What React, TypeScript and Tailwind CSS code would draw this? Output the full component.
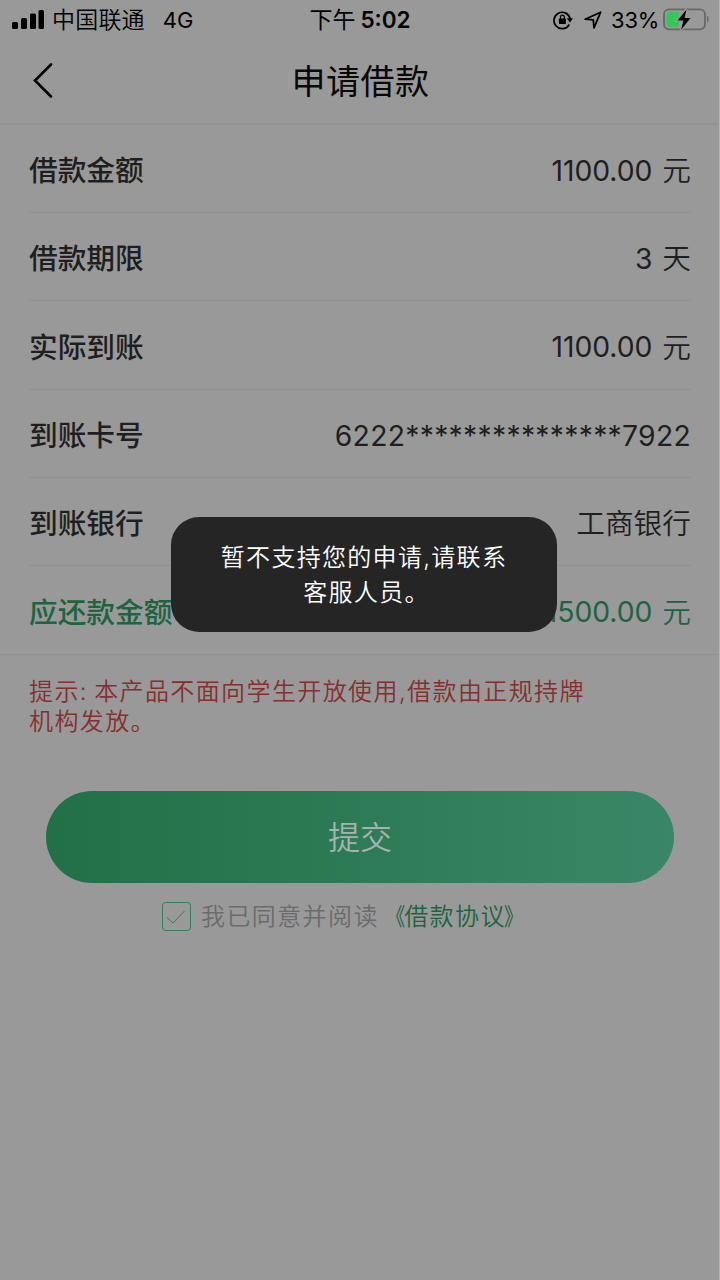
import React from "react";

type LoanRow = {
  label: string;
  value?: string;
  unit?: string;
  wide?: boolean;
  highlight?: boolean;
};

const rows: LoanRow[] = [
  { label: "借款金额", value: "1100.00", unit: "元" },
  { label: "借款期限", value: "3", unit: "天" },
  { label: "实际到账", value: "1100.00", unit: "元" },
  { label: "到账卡号", value: "6222***************7922", wide: true },
  { label: "到账银行", unit: "工商银行" },
  { label: "应还款金额", value: "1500.00", unit: "元", highlight: true },
];

const StatusBar: React.FC = () => {
  return (
    <div className="grid h-10 grid-cols-[1fr_auto_1fr] items-center pl-3 pr-[9px] text-[23px] leading-none text-black">
      <div className="flex items-center">
        <svg width="33" height="20" viewBox="0 0 33 20" fill="#000">
          <rect x="0" y="12" width="6" height="7" rx="1.6" />
          <rect x="9" y="8" width="6" height="11" rx="1.6" />
          <rect x="18" y="3.5" width="6" height="15.5" rx="1.6" />
          <rect x="26.5" y="0" width="5.5" height="19" rx="1.6" />
        </svg>
        <span className="ml-[7px] font-[350] tracking-[0.2px]">中国联通</span>
        <span className="ml-[18px] text-[22px]">4G</span>
      </div>
      <div className="flex items-center gap-[5px] pr-[2px]">
        <span>下午</span>
        <span className="text-[22.5px] font-semibold">5:02</span>
      </div>
      <div className="flex items-center justify-end">
        {/* rotation lock */}
        <svg width="20" height="20" viewBox="0 0 20 20" fill="none">
          <path d="M16.3 14.5A8.2 8.2 0 1 1 17.2 9" stroke="#000" strokeWidth="1.7" />
          <path d="M13.8 8.3h6.2l-3.1 4.2z" fill="#000" />
          <rect x="5.9" y="8.5" width="7" height="5.6" rx="0.8" fill="#000" />
          <path d="M7.5 9V7a1.9 1.9 0 0 1 3.8 0v2" stroke="#000" strokeWidth="1.3" />
        </svg>
        <svg className="ml-[11px]" width="18" height="18" viewBox="0 0 18 18" fill="none">
          <path d="M1.2 8.2 16.6 1.2 10 16.8 9.3 8.8z" stroke="#000" strokeWidth="1.8" strokeLinejoin="round" />
        </svg>
        <span className="ml-[9px] text-[22px] tracking-[-0.3px]">33%</span>
        <svg className="ml-1" width="47" height="24" viewBox="0 0 47 24" fill="none">
          <rect x="1" y="1.3" width="41" height="20" rx="5" stroke="#686868" strokeWidth="1.8" />
          <path d="M44 8c2.2.8 2.2 5.8 0 6.6z" fill="#686868" />
          <rect x="3.5" y="3.8" width="12.5" height="15" rx="2.5" fill="#34c759" />
          <path
            d="M23.5 1.5 14.5 12.5h6l-2.5 9.5L27.5 10h-6z"
            fill="#000"
            stroke="#999"
            strokeWidth="3"
            paintOrder="stroke"
          />
        </svg>
      </div>
    </div>
  );
};

const App: React.FC = () => {
  return (
    <div className="relative h-[1280px] w-[720px] overflow-hidden border-r border-[#b5b5b5] bg-[#999999] font-['Inter','Noto_Sans_CJK_SC',sans-serif]">
      <StatusBar />
      <header className="grid h-[85px] grid-cols-[1fr_auto_1fr] items-center border-b-2 border-[#929292] px-[30px] pb-[3px]">
        <svg width="26" height="38" viewBox="0 0 26 38" fill="none">
          <path d="M21 3.5 5 19.5 21 35.5" stroke="#000" strokeWidth="2.6" strokeLinecap="round" />
        </svg>
        <h1 className="pl-[2px] pt-[3px] text-[34px] leading-none tracking-[0.5px] text-[#080808]">申请借款</h1>
      </header>

      <ul className="border-b border-[#919191] pl-[29px] pr-[28px]">
        {rows.map((row) => (
          <li
            key={row.label}
            className={`flex h-[88.2px] items-center justify-between border-b border-[#919191] pt-[6px] text-[28.7px] leading-none last:border-b-0 ${
              row.highlight ? "text-[#1e643f]" : "text-[#1f1f1f]"
            }`}
          >
            <span className="font-medium">{row.label}</span>
            <div className="flex items-center gap-[10px]">
              {row.value && (
                <span className={`-mt-px text-[28.3px] ${row.wide ? "tracking-[0.28px]" : "tracking-[-0.05px]"}`}>
                  {row.value}
                </span>
              )}
              {row.unit && <span className="font-[350]">{row.unit}</span>}
            </div>
          </li>
        ))}
      </ul>

      <p className="px-[29px] pt-[22px] text-[24px] leading-[30px] font-[350] tracking-[1.4px] text-[#852f2f]">
        <span className="-mr-[2px]">提示: </span>
        本产品不面向学生开放使用,借款由正规持牌
        <br />
        机构发放。
      </p>

      <div className="mt-[54px] pl-[46px] pr-[45px]">
        <button className="h-[92px] w-full rounded-full bg-linear-to-r from-[#217047] to-[#398766] pt-[2px] text-[32px] font-[350] text-[#a5b3ab]">
          提交
        </button>
      </div>

      <div className="mt-[18px] flex items-center pl-[162px] text-[24px] leading-[30px] font-[350] tracking-[1.4px]">
        <svg width="29" height="29" viewBox="0 0 29 29" fill="none" stroke="#32805c">
          <rect x="0.5" y="0.5" width="28" height="28" rx="3" />
          <path d="M5 15.5 11 21 22.5 9" />
        </svg>
        <span className="ml-[10px] pt-px text-[#6b6b6b]">我已同意并阅读</span>
        <span className="flex pt-px text-[#1e643f]">
          <span className="inline-block origin-right translate-x-[2px] scale-x-[0.8] font-normal">《</span>
          借款协议
          <span className="inline-block origin-left -translate-x-[2px] scale-x-[0.8] font-normal">》</span>
        </span>
      </div>

      <div className="absolute left-[171px] top-[517px] flex h-[115px] w-[386px] items-center justify-center rounded-[28px] bg-[#252525] pt-px text-center text-[24px] leading-[35px] font-[350] tracking-[1.3px] text-white">
        <p>
          暂不支持您的申请,请联系
          <br />
          <span className="pl-[5px]">客服人员。</span>
        </p>
      </div>
    </div>
  );
};

export default App;
